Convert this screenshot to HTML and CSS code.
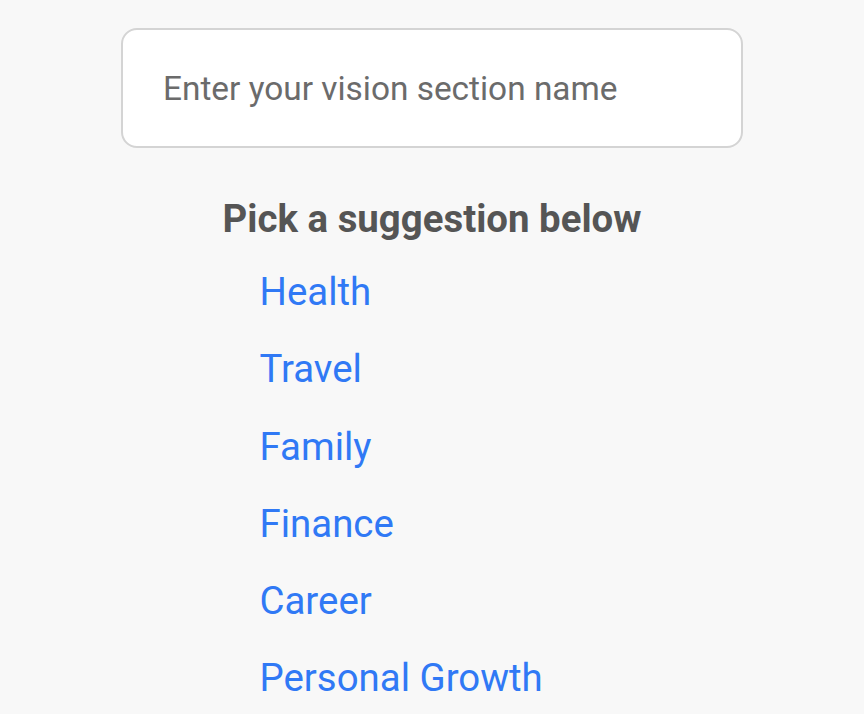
FILE: index.html
```html
<!DOCTYPE html>
<html>
<head>
<meta charset="utf-8">
<link rel="stylesheet" href="styles.css">
</head>
<body>
<div class="page">
  <div class="field">
    <input class="name-input" type="text" placeholder="Enter your vision section name">
  </div>
  <h2 class="title">Pick a suggestion below</h2>
  <ul class="suggestions">
    <li><a href="#">Health</a></li>
    <li><a href="#">Travel</a></li>
    <li><a href="#">Family</a></li>
    <li><a href="#">Finance</a></li>
    <li><a href="#">Career</a></li>
    <li><a href="#">Personal Growth</a></li>
  </ul>
</div>
</body>
</html>
```
FILE: styles.css
```css
html, body {
  margin: 0;
  padding: 0;
  background: #f8f8f8;
  font-family: Roboto, "Noto Sans", sans-serif;
}
.page {
  display: flex;
  flex-direction: column;
  align-items: center;
  padding-top: 28px;
}
.field {
  width: 622px;
}
.name-input {
  box-sizing: border-box;
  width: 100%;
  height: 120px;
  border: 2px solid #d4d4d4;
  border-radius: 16px;
  background: #fff;
  padding: 0 40px;
  font-family: Roboto, sans-serif;
  font-size: 33.4px;
  color: #333;
  outline: none;
}
.name-input::placeholder {
  color: #6b6b6b;
}
.title {
  margin: 48px 0 0;
  font-size: 38.4px;
  font-weight: 700;
  color: #555555;
  line-height: 45px;
}
.suggestions {
  list-style: none;
  margin: 27px 0 0;
  padding: 0 1px 0 0;
  width: 344px;
}
.suggestions li {
  height: 77.3px;
  line-height: 48px;
}
.suggestions a {
  font-size: 38.4px;
  color: #3079f5;
  text-decoration: none;
}
```
